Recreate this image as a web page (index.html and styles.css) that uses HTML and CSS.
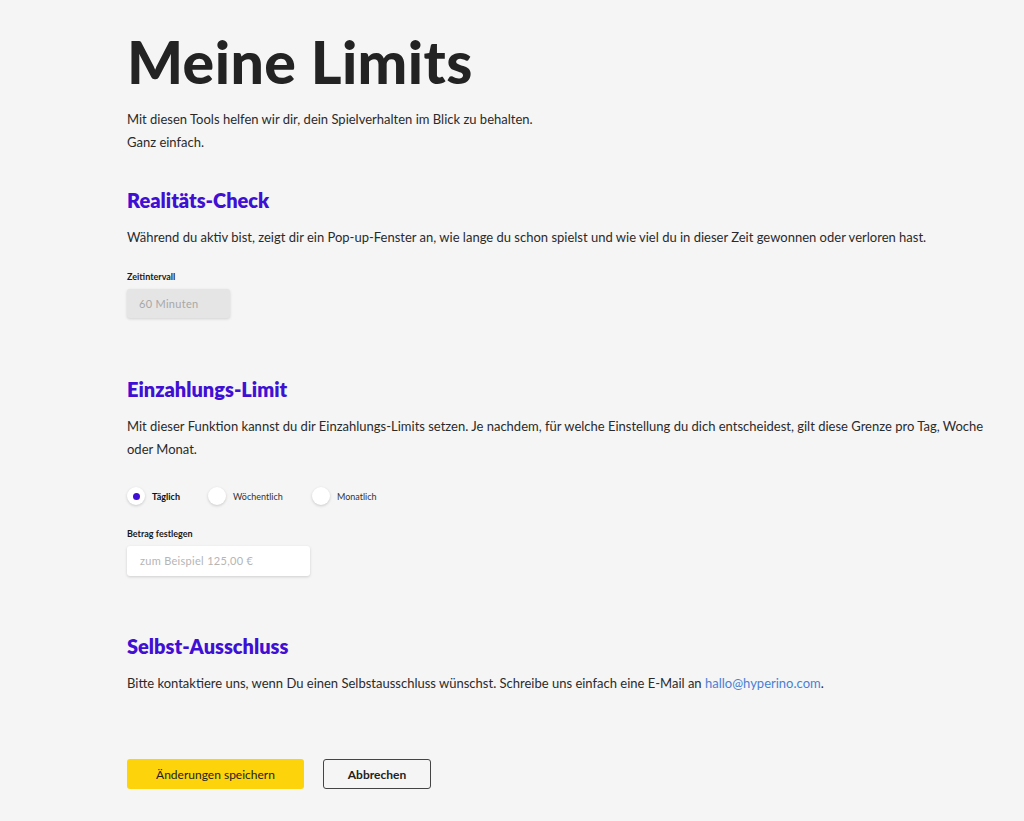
FILE: index.html
```html
<!DOCTYPE html>
<html lang="de">
<head>
<meta charset="utf-8">
<title>Meine Limits</title>
<link rel="stylesheet" href="styles.css">
</head>
<body>
<main class="page">
  <h1 class="title">Meine Limits</h1>
  <p class="text intro">Mit diesen Tools helfen wir dir, dein Spielverhalten im Blick zu behalten.<br>Ganz einfach.</p>

  <section class="section reality">
    <h2 class="heading">Realitäts-Check</h2>
    <p class="text">Während du aktiv bist, zeigt dir ein Pop-up-Fenster an, wie lange du schon spielst und wie viel du in dieser Zeit gewonnen oder verloren hast.</p>
    <div class="field">
      <div class="label">Zeitintervall</div>
      <div class="select">60 Minuten</div>
    </div>
  </section>

  <section class="section deposit">
    <h2 class="heading">Einzahlungs-Limit</h2>
    <p class="text">Mit dieser Funktion kannst du dir Einzahlungs-Limits setzen. Je nachdem, für welche Einstellung du dich entscheidest, gilt diese Grenze pro Tag, Woche oder Monat.</p>
    <div class="radios">
      <label class="radio active"><span class="dot"></span><span class="rlabel">Täglich</span></label>
      <label class="radio"><span class="dot"></span><span class="rlabel">Wöchentlich</span></label>
      <label class="radio"><span class="dot"></span><span class="rlabel">Monatlich</span></label>
    </div>
    <div class="field">
      <div class="label">Betrag festlegen</div>
      <div class="input">zum Beispiel 125,00 €</div>
    </div>
  </section>

  <section class="section exclusion">
    <h2 class="heading">Selbst-Ausschluss</h2>
    <p class="text">Bitte kontaktiere uns, wenn Du einen Selbstausschluss wünschst. Schreibe uns einfach eine E-Mail an <a class="link" href="#">hallo@hyperino.com</a>.</p>
  </section>

  <div class="actions">
    <button class="btn primary">Änderungen speichern</button>
    <button class="btn secondary">Abbrechen</button>
  </div>
</main>
</body>
</html>
```
FILE: styles.css
```css
* { box-sizing: border-box; }
html, body { margin: 0; padding: 0; }
body {
  background: #f5f5f5;
  color: #222;
  font-family: "Lato", "Noto Sans", sans-serif;
}
.page {
  padding: 24px 0 0 127px;
  width: 1024px;
}
.title {
  margin: 0;
  font-size: 59px;
  line-height: 76px;
  font-weight: 900;
  color: #232323;
  letter-spacing: 0.4px;
}
.text {
  margin: 0;
  font-size: 13px;
  line-height: 23px;
  color: #2a2a2a;
  max-width: 860px;
}
.intro { margin-top: 8px; }
.section { margin-top: 36px; }
.reality { margin-top: 33px; }
.heading {
  margin: 0 0 13px;
  font-size: 20px;
  line-height: 26px;
  font-weight: 800;
  color: #3f10d4;
}
.field { margin-top: 22px; }
.label {
  font-size: 9px;
  font-weight: 700;
  line-height: 12px;
  color: #1a1a1a;
  margin-bottom: 6px;
}
.select {
  width: 103px;
  height: 29px;
  background: #e5e5e5;
  border-radius: 3px;
  box-shadow: 0 1px 3px rgba(0,0,0,0.15);
  font-size: 11px;
  line-height: 29px;
  padding-left: 12px;
  color: #a8a8a8;
  letter-spacing: 0.3px;
}
.deposit { margin-top: 58px; }
.radios {
  display: flex;
  margin-top: 26px;
}
.radio {
  display: flex;
  align-items: center;
  font-size: 9px;
  color: #333;
}
.radio:nth-child(1) { width: 81px; }
.radio:nth-child(2) { width: 104px; }
.dot {
  width: 18px;
  height: 18px;
  border-radius: 50%;
  background: #fff;
  box-shadow: 0 1px 3px rgba(0,0,0,0.18);
  display: flex;
  align-items: center;
  justify-content: center;
  margin-right: 7px;
}
.radio.active .dot::after {
  content: "";
  width: 7px;
  height: 7px;
  border-radius: 50%;
  background: #3f10d4;
}
.radio.active .rlabel { font-weight: 700; color: #111; }
.deposit .field { margin-top: 23px; }
.input {
  width: 183px;
  height: 30px;
  background: #fff;
  border-radius: 3px;
  box-shadow: 0 1px 3px rgba(0,0,0,0.16);
  font-size: 11px;
  line-height: 30px;
  padding-left: 13px;
  color: #b5b5b5;
  letter-spacing: 0.3px;
}
.exclusion { margin-top: 57px; }
.exclusion .heading { margin-bottom: 13px; }
.link { color: #4a7fd4; text-decoration: none; }
.actions {
  display: flex;
  gap: 19px;
  margin-top: 64px;
}
.btn {
  height: 30px;
  font-family: "Lato", "Noto Sans", sans-serif;
  font-size: 12px;
  border-radius: 3px;
  cursor: pointer;
  color: #222;
}
.primary {
  width: 177px;
  background: #fdd30b;
  border: none;
}
.secondary {
  width: 108px;
  background: transparent;
  border: 1px solid #444;
  font-weight: 700;
}
```
